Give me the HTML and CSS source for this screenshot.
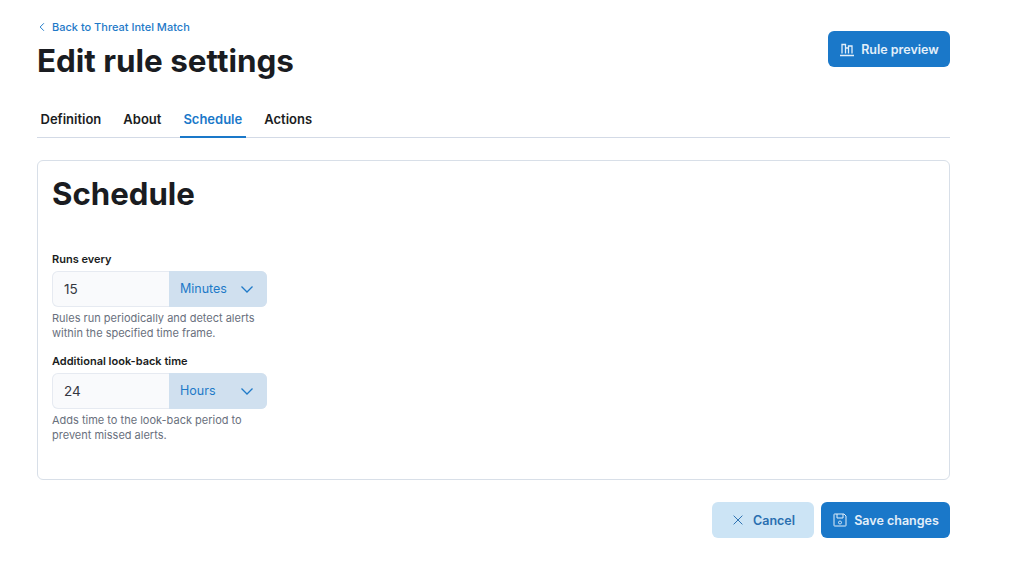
FILE: index.html
```
<!DOCTYPE html>
<html lang="en">
<head>
<meta charset="utf-8">
<title>Edit rule settings</title>
<link rel="stylesheet" href="styles.css">
</head>
<body>
<main class="page">
  <header class="head">
    <div class="head-left">
      <a class="back"><svg class="back-ico" viewBox="0 0 16 16" width="12" height="12"><path d="M10.500 3 5.500 8l5 5" fill="none" stroke="currentColor" stroke-width="1.300"/></svg>Back to Threat Intel Match</a>
      <h1 class="title">Edit rule settings</h1>
    </div>
    <button class="btn btn-primary preview"><svg viewBox="0 0 16 16" width="16" height="16" class="ico"><path d="M1 14.500h14M3 12.500V3.500h3.500v9M6.500 7h3v5.500M9.500 12.500V5H13v7.500" fill="none" stroke="currentColor" stroke-width="1.300"/></svg>Rule preview</button>
  </header>
  <nav class="tabs">
    <a class="tab">Definition</a>
    <a class="tab">About</a>
    <a class="tab active">Schedule</a>
    <a class="tab">Actions</a>
  </nav>
  <section class="panel">
    <h2 class="panel-title">Schedule</h2>
    <div class="field first">
      <label class="label">Runs every</label>
      <div class="group">
        <span class="num">15</span>
        <span class="unit">Minutes<svg viewBox="0 0 16 16" width="16" height="16" class="chev"><path d="M2.500 5.500 8 11l5.500-5.500" fill="none" stroke="currentColor" stroke-width="1.300"/></svg></span>
      </div>
      <p class="help">Rules run periodically and detect alerts<br>within the specified time frame.</p>
    </div>
    <div class="field second">
      <label class="label">Additional look-back time</label>
      <div class="group">
        <span class="num">24</span>
        <span class="unit">Hours<svg viewBox="0 0 16 16" width="16" height="16" class="chev"><path d="M2.500 5.500 8 11l5.500-5.500" fill="none" stroke="currentColor" stroke-width="1.300"/></svg></span>
      </div>
      <p class="help">Adds time to the look-back period to<br>prevent missed alerts.</p>
    </div>
  </section>
  <footer class="actions">
    <button class="btn btn-soft"><svg viewBox="0 0 16 16" width="14" height="14" class="ico"><path d="M3 3l10 10M13 3 3 13" fill="none" stroke="currentColor" stroke-width="1.100"/></svg>Cancel</button>
    <button class="btn btn-primary save"><svg viewBox="0 0 16 16" width="16" height="16" class="ico"><path d="M2.500 2h9.500l2 2v9.500a.5.500 0 0 1-.5.500h-11a.5.500 0 0 1-.5-.5v-11a.5.500 0 0 1 .5-.5ZM5 2v4h6V2M8 9a1.500 1.500 0 1 0 .01 0Z" fill="none" stroke="currentColor" stroke-width="1"/></svg>Save changes</button>
  </footer>
</main>
</body>
</html>
```
FILE: styles.css
```
* { box-sizing: border-box; }
html, body { margin: 0; padding: 0; background: #fff; }
body { font-family: Inter, "Liberation Sans", sans-serif; color: #1a1c21; }
.page { width: 950px; padding: 19px 0 0 37px; }
.head { display: flex; justify-content: space-between; align-items: flex-start; height: 83px; }
.head-left { display: flex; flex-direction: column; }
.back { display: flex; align-items: center; gap: 4px; font-size: 11px; line-height: 16px; font-weight: 500; color: #1f7ac8; }
.back-ico { flex: none; margin-left: -1px; }
.title { margin: 8px 0 0; font-size: 31.400px; line-height: 36px; font-weight: 700; }
.btn { display: inline-flex; align-items: center; justify-content: center; height: 36px; border: 0; border-radius: 6px; font-family: inherit; font-size: 12.500px; font-weight: 600; padding: 0; }
.btn-primary { background: #1a78c9; color: #e3eff9; }
.btn-soft { background: #cce4f5; color: #2a6fb0; width: 102px; gap: 8px; }
.preview { width: 122px; gap: 6px; margin-top: 12px; }
.save { width: 129px; gap: 6px; }
.ico { flex: none; }
.tabs { display: flex; gap: 14.500px; height: 36px; border-bottom: 1px solid #d3dae6; }
.tab { height: 36px; padding: 0 4px 0 3.500px; line-height: 35px; font-size: 13px; font-weight: 600; }
.tab.active { color: #1a78c9; border-bottom: 2px solid #1a78c9; }
.panel { margin-top: 22px; height: 320px; border: 1px solid #d8dfe8; border-radius: 6px; padding: 15px 14px 14px; }
.panel-title { margin: 0; font-size: 31.200px; line-height: 36px; font-weight: 700; }
.field { width: 215px; }
.first { margin-top: 40px; }
.second { margin-top: 13.400px; }
.label { display: block; font-size: 11px; line-height: 15px; font-weight: 600; margin-bottom: 4px; }
.group { display: flex; height: 36px; border-radius: 6px; overflow: hidden; box-shadow: inset 0 0 0 1px #e6eaf1; background: #f9fafc; }
.num { width: 117px; padding-left: 12px; font-size: 13.500px; line-height: 37px; color: #343741; }
.unit { flex: 1; display: flex; align-items: center; justify-content: space-between; padding: 0 12px 1px 11px; background: #d0e0ef; color: #1f7ac8; font-size: 12.500px; }
.chev { flex: none; }
.help { margin: 4px 0 0; font-size: 11px; line-height: 15px; color: #69707d; }
.actions { display: flex; justify-content: flex-end; gap: 7px; margin-top: 22px; }
```
